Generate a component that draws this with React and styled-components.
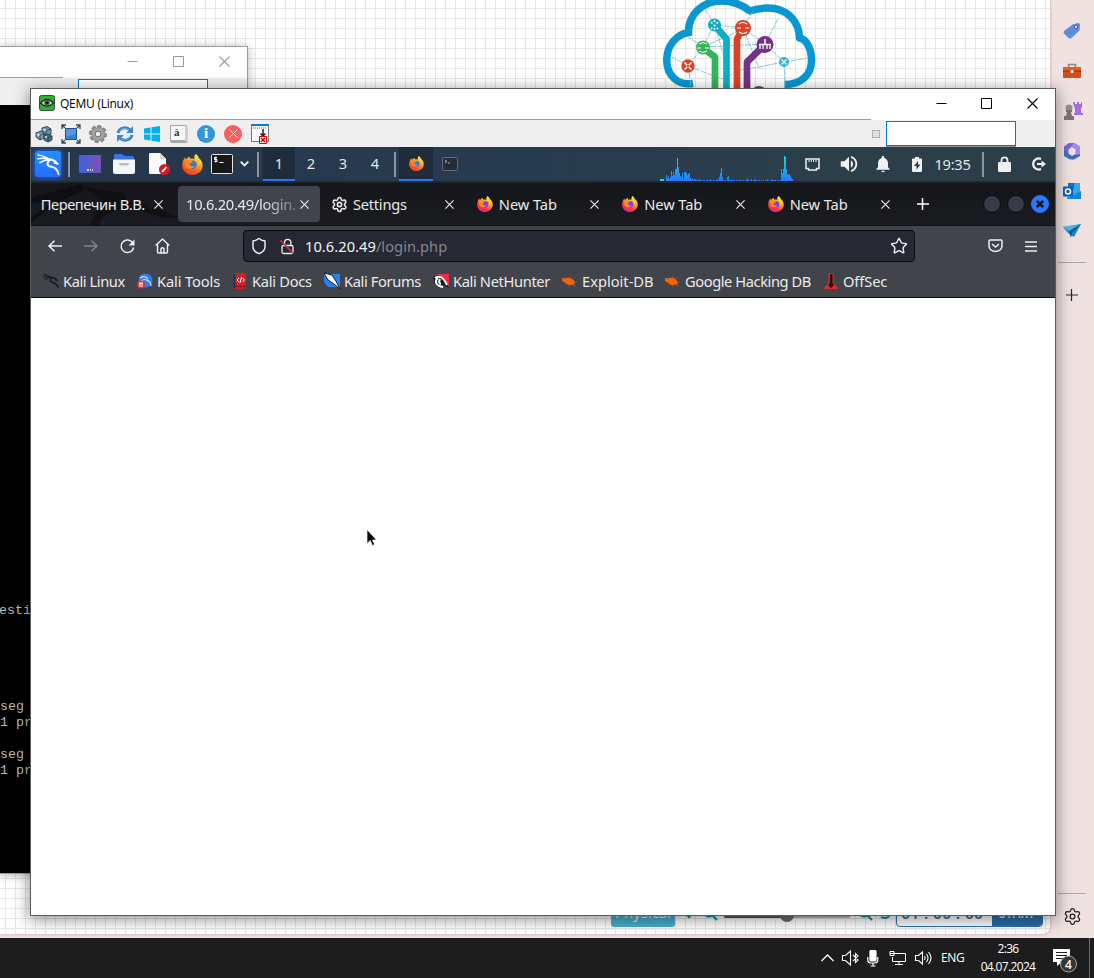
import React, { useId } from 'react';
import styled, { createGlobalStyle } from 'styled-components';
import { Settings, Star, Shield } from 'lucide-react';
import { MdVolumeUp, MdNotifications } from 'react-icons/md';

const GlobalStyle = createGlobalStyle`
  * { box-sizing: border-box; }
  body { margin: 0; overflow: hidden; }
  svg { display: block; flex: none; overflow: visible; }
`;

const ui = '"Open Sans", "Noto Sans", sans-serif';
const kali = '"Noto Sans", "Open Sans", sans-serif';

const Screen = styled.div`
  position: relative;
  width: 1094px;
  height: 978px;
  overflow: hidden;
  background: #f0e2e1;
  font-family: ${ui};
  display: flex;
  flex-direction: column;
`;
const BrowserArea = styled.div`
  display: flex;
  height: 938px;
`;
const Canvas = styled.div`
  width: 1050px;
  height: 934px;
  border-radius: 0 0 7px 0;
  box-shadow: 0 0 3px rgba(90, 50, 50, 0.35);
  background-color: #fff;
  background-image: linear-gradient(to right, #e7e7e7 1px, transparent 1px),
    linear-gradient(to bottom, #e7e7e7 1px, transparent 1px);
  background-size: 10px 10px;
  background-position: 5px 8px;
  display: flex;
  flex-direction: column;
  justify-content: space-between;
`;
const LogoRow = styled.div`
  padding-left: 660px;
  height: 100px;
`;
const LabControls = styled.div`
  display: flex;
  align-items: flex-end;
  padding: 0 5px 7px 611px;
  height: 40px;
`;
const PhysicalButton = styled.div`
  width: 64px;
  height: 29px;
  border-radius: 3px;
  background: #4aaecb;
  color: #e7f5f9;
  font-size: 15px;
  line-height: 28px;
  text-align: center;
`;
const ControlIcons = styled.div`
  width: 34px;
  height: 28px;
  flex: none;
  margin-left: ${(p) => p.$gap || 0}px;
`;
const ZoomTrack = styled.div`
  width: 126px;
  height: 3px;
  margin: 0 8px 9px 6px;
  border-radius: 2px;
  background: linear-gradient(to right, #555 64px, #b5b5b5 64px);
  display: flex;
  align-items: center;
  justify-content: center;
`;
const ZoomKnob = styled.div`
  flex: none;
  width: 14px;
  height: 14px;
  border-radius: 50%;
  background: #6b6b6b;
  margin-top: -3px;
`;
const Timer = styled.div`
  display: flex;
  margin-left: 4px;
  width: 147px;
  height: 30px;
  border: 1px solid #2f72ac;
  border-radius: 4px;
  overflow: hidden;
  background: #fff;
  color: #2d6ca5;
  font: 600 16px/30px ${ui};
`;
const TimerDigits = styled.div`
  width: 95px;
  height: 30px;
  display: flex;
  justify-content: space-between;
  padding: 0 9px 0 4px;
`;
const StartButton = styled.div`
  flex: 1;
  height: 30px;
  background: #2e6da6;
  color: #dce9f5;
  font-size: 12px;
  line-height: 32px;
  text-align: center;
`;

const EdgeRail = styled.div`
  width: 44px;
  display: flex;
  flex-direction: column;
  align-items: center;
  padding: 21px 0 12px;
`;
const RailItem = styled.div`
  width: 20px;
  height: 20px;
  margin-bottom: 20px;
  display: flex;
  align-items: center;
  justify-content: center;
`;
const RailLine = styled.div`
  width: 28px;
  height: 1px;
  background: #b4a9a9;
  margin: ${(p) => p.$m};
`;

const Window = styled.div`
  position: absolute;
  left: ${(p) => p.$x}px;
  top: ${(p) => p.$y}px;
  width: ${(p) => p.$w}px;
  height: ${(p) => p.$h}px;
  display: flex;
  flex-direction: column;
  border: 1px solid ${(p) => (p.$active ? '#5b5b5b' : '#9b9b9b')};
  background: #fff;
  box-shadow: ${(p) => (p.$active ? '0 3px 15px 1px rgba(0,0,0,.42)' : '0 1px 9px rgba(0,0,0,.3)')};
`;
const TitleBar = styled.div`
  display: flex;
  align-items: center;
  height: ${(p) => p.$h}px;
  flex: none;
  padding: 0 0 2px 8px;
  color: #000;
  font-size: 12px;
`;
const Title = styled.span`
  margin-left: 5px;
  letter-spacing: -0.25px;
  flex: 1;
`;
const CaptionButton = styled.div`
  width: ${(p) => p.$w || 45}px;
  display: flex;
  justify-content: center;
  color: ${(p) => (p.$dim ? '#9a9a9a' : '#000')};
`;
const Rule = styled.div`
  width: ${(p) => p.$w}px;
  height: 1px;
  flex: none;
  background: #a0a0a0;
`;
const ToolBar = styled.div`
  height: ${(p) => p.$h}px;
  flex: none;
  background: #efefef;
  display: flex;
  align-items: center;
  gap: 9px;
  padding: 0 39px 0 4px;
`;
const Push = styled.div`
  flex: 1;
`;
const Grip = styled.div`
  width: 8px;
  height: 8px;
  border: 1px solid #adadad;
  background: #e1e1e1;
  margin-right: -3px;
`;
const Field = styled.div`
  width: 130px;
  height: 25px;
  background: #fff;
  border: 1px solid #0078d7;
  box-shadow: 0 1px 0 #8c8c8c;
`;
const Console = styled.div`
  flex: 1;
  background: #000;
  color: #bdbdbd;
  font: 300 13.33px/16px "Liberation Mono", monospace;
  white-space: pre;
  padding-top: 498px;
  text-indent: -1px;
`;

const Panel = styled.div`
  height: 34px;
  flex: none;
  display: flex;
  align-items: center;
  background: linear-gradient(to right, #27374c, #273b50 45%, #2b3e4b 75%, #2b3e49);
  color: #e4e6e8;
  font: 14.67px ${kali};
`;
const Slot = styled.div`
  width: ${(p) => p.$w}px;
  height: 100%;
  flex: none;
  display: flex;
  align-items: center;
  justify-content: center;
  margin-left: ${(p) => p.$gap || 0}px;
  color: #f0f0f0;
`;
const KaliMenu = styled.div`
  width: 26px;
  height: 26px;
  border-radius: 3px;
  background: linear-gradient(to bottom, #2391ff, #256cff);
  box-shadow: 0 0 5px 1px #1e63d0;
  display: flex;
  align-items: center;
  justify-content: center;
`;
const Divider = styled.div`
  width: 2px;
  height: 25px;
  background: #8d959d;
`;
const Workspace = styled.div`
  width: ${(p) => p.$w || 32}px;
  height: 34px;
  flex: none;
  display: flex;
  align-items: center;
  justify-content: center;
  background: ${(p) => (p.$on ? '#1f2c3b' : 'transparent')};
  border-bottom: 2px solid ${(p) => (p.$on ? '#2777ff' : 'transparent')};
`;
const Clock = styled.div`
  width: 37px;
  margin-right: 5px;
  padding-bottom: 1px;
  white-space: nowrap;
  font-size: 14.67px;
  letter-spacing: -0.3px;
  text-align: center;
`;

const TabStrip = styled.div`
  position: relative;
  height: 45px;
  flex: none;
  display: flex;
  align-items: center;
  border-top: 2px solid #23262c;
  border-bottom: 1px solid #0e0f12;
  background: linear-gradient(to bottom, #15161a, #1b1c21);
  color: #e9e9ea;
  font: 14.67px ${kali};
`;
const DragonShade = styled.svg`
  position: absolute;
  left: 0;
  top: 0;
`;
const Tab = styled.div`
  position: relative;
  width: 145.4px;
  flex: none;
  display: flex;
  justify-content: center;
`;
const TabBody = styled.div`
  width: 142px;
  height: 36px;
  border-radius: 4px;
  display: flex;
  align-items: center;
  padding: 0 11.5px 0 8px;
  background: ${(p) => (p.$on ? '#42444b' : 'transparent')};
`;
const TabLabel = styled.span`
  flex: 1;
  min-width: 0;
  white-space: nowrap;
  margin-left: ${(p) => p.$gap || 0}px;
  letter-spacing: ${(p) => p.$ls || 0}px;
  ${(p) => p.$fade && 'mask-image: linear-gradient(to right, #000 65%, rgba(0,0,0,.2) 100%);'}
`;
const WmButton = styled.div`
  width: 18px;
  height: 18px;
  margin: 0 6px 1px 0;
  flex: none;
  border-radius: 50%;
  border: 1px solid ${(p) => (p.$close ? '#2777ff' : '#0b0c0e')};
  background: ${(p) => (p.$close ? '#2777ff' : '#373b48')};
  display: flex;
  align-items: center;
  justify-content: center;
`;

const NavBar = styled.div`
  height: 40px;
  flex: none;
  display: flex;
  align-items: center;
  padding-left: 6px;
  background: #42444b;
  color: #f2f2f3;
`;
const UrlBar = styled.div`
  width: 672px;
  height: 32px;
  margin-left: 62px;
  border: 1px solid #0b0c10;
  border-radius: 4px;
  background: #262833;
  display: flex;
  align-items: center;
  padding: 0 6px 0 6px;
  font: 14.67px ${kali};
`;
const UrlText = styled.div`
  flex: 1;
  margin-left: 3px;
  letter-spacing: 0.04px;
  color: #f3f3f4;
  span { color: #85868d; }
`;
const Bookmarks = styled.div`
  height: 32px;
  flex: none;
  display: flex;
  align-items: center;
  padding: 0 0 2px 12px;
  background: #42444b;
  border-bottom: 1px solid #0c0c0d;
  color: #ebebec;
  font: 14.67px ${kali};
`;
const Bookmark = styled.div`
  width: ${(p) => p.$w}px;
  letter-spacing: ${(p) => p.$ls}px;
  flex: none;
  display: flex;
  align-items: center;
  gap: ${(p) => p.$gap || 4}px;
  white-space: nowrap;
`;
const Page = styled.div`
  flex: 1;
  background: #fff;
`;
const Pointer = styled.svg`
  position: absolute;
  left: 366px;
  top: 529px;
`;

const TaskBar = styled.div`
  position: relative;
  height: 40px;
  background: #1d1d1e;
  display: flex;
  align-items: center;
  justify-content: flex-end;
  color: #fff;
  font-size: 12px;
`;
const Tray = styled.div`
  display: flex;
  align-items: center;
  gap: 8px;
`;
const Lang = styled.span`
  width: 25px;
  white-space: nowrap;
  letter-spacing: -0.35px;
  margin: 0 12px 1px 1px;
`;
const DateTime = styled.div`
  width: 60px;
  white-space: nowrap;
  margin-right: 15px;
  display: flex;
  flex-direction: column;
  align-items: center;
  line-height: 18px;
  letter-spacing: -0.65px;
`;
const ShowDesktop = styled.div`
  width: 5px;
  height: 40px;
  margin-left: 12px;
  border-left: 1px solid #67686b;
`;

function Minimize() {
  return <svg width="11" height="11" stroke="currentColor"><path d="M.5 5.500h10" /></svg>;
}
function Maximize() {
  return <svg width="11" height="11" stroke="currentColor" fill="none"><path d="M.5.5h10v10H.5z" /></svg>;
}
function Close({ size = 11, width = 1.1 }) {
  return (
    <svg width={size} height={size} viewBox="0 0 11 11" stroke="currentColor" strokeWidth={width} fill="none">
      <path d="M.5.5l10 10M10.5.5l-10 10" />
    </svg>
  );
}

function CloudLogo() {
  const nodes = [
    [28, 66, 6.7, '#d74528'], [43, 47.5, 7, '#35b558'], [54.5, 25, 6.5, '#08afc7'],
    [83, 28, 8, '#d74528'], [105, 44.5, 8.5, '#753286'], [124, 62, 5, '#35aee0'],
  ];
  return (
    <svg width="160" height="95" fill="none">
      <path d="M33 84.500C17 87 6.700 75.500 6.700 61c0-14 9.300-25.500 21.800-27.500C28 15.500 43 2 61 2c13 0 22.500 4.500 29.500 10.500"
        stroke="#0797d3" strokeWidth="7.500" transform="translate(0 -1)" />
      <path d="M88 11.500c8-2.500 12-3.500 20-3.500 18 0 29.500 10 32 30 8 .5 11.500 10 11.500 22.500C151.500 75 142 84.500 124 84.500"
        stroke="none" />
      <path d="M88 11.500c7-2.500 12-3.500 20-3.500 19 0 31 13 31.500 30 6.500 1 12 10 12 22.500 0 14-10 24-27 24"
        stroke="#0797d3" strokeWidth="7.500" strokeLinejoin="round" />
      <g stroke="#6cbadb" strokeWidth=".8">
        <path d="M45 9l10 16 28 3 23 17 18 17M54 25L43 47 28 66l3 20M55 25l14 50M43 47l62-3 13-25M43 47L28 37M83 28l10-17M28 66l-16-9M124 62l24-4M124 62l-36 7M124 62l1 24M43 47l40-18M28 66l34 13 26-12M83 28l16 40" strokeDasharray="6 1" />
      </g>
      <g strokeWidth="6.700" strokeLinejoin="round">
        <path d="M43 48l12 9v35" stroke="#35b558" />
        <path d="M54.500 25l12 14v53" stroke="#08afc7" />
        <path d="M83 28l-6 11v53" stroke="#d74528" />
        <path d="M105 44.500L87 62v30" stroke="#753286" />
      </g>
      <circle cx="99" cy="94" r="8" fill="#753286" />
      {nodes.map(([x, y, r, c]) => <circle key={x} cx={x} cy={y} r={r} fill={c} />)}
      <g stroke="#fff" strokeWidth="1.500">
        <path d="M24.500 62.500l7 7M31.500 62.500l-7 7" strokeDasharray="4 2" />
        <path d="M51 22l7 7M58 22l-7 7M54.500 20v2M54.500 28v2" strokeDasharray="2 2" />
        <path d="M37 48h4M45 48h4M39 44q4-3 8 0M39 51q4 3 8 0" strokeWidth="1" />
        <path d="M77 28h4M85 28h4M79 24q4-3 8 0M79 32q4 3 8 0" strokeWidth="1.200" />
        <path d="M99 44.500h12M105 39v5" /><path d="M100 45v4M103 45v4M107 45v4M110 45v4" strokeWidth="1.300" />
        <path d="M121.500 59.500l5 5M126.500 59.500l-5 5" strokeWidth="1.200" />
      </g>
    </svg>
  );
}

function Firefox({ size = 16, panel }) {
  const id = useId();
  return (
    <svg width={size} height={size} viewBox="0 0 20 20">
      <defs>
        <linearGradient id={`${id}a`} x1=".8" y1="0" x2=".25" y2="1">
          <stop offset=".1" stopColor="#fff04a" />
          <stop offset=".42" stopColor="#ff9a23" />
          <stop offset=".72" stopColor={panel ? '#ff5a1e' : '#ff3550'} />
          <stop offset="1" stopColor={panel ? '#e83a2a' : '#e01b8b'} />
        </linearGradient>
      </defs>
      <path d="M13 0c2 1.300 2.700 2.800 3.300 4 2.500 1.800 3.700 5 3.300 8-.6 4.700-4.700 8-9.600 8C4.400 20 0 15.800.2 10.500.3 7.500 1.500 4.500 3 3c.1 1 .3 1.500.7 2C5 3.700 6 2.700 7.500 2.500 7.200 3.300 7.500 4 8 4.600c1.300-.5 3-.3 4 .3C11.300 3.200 11.800 1.500 13 0z" fill={`url(#${id}a)`} />
      <circle cx="10" cy="10.300" r="4" fill={panel ? '#3577dd' : '#7a3fe0'} />
      <path d="M2.500 6.500c3-1.500 6-1 7.900 1.300-1.600.1-2.500 1-3.500 1.500.6 2.500 3.200 3.300 5.500 2.100-1.500 3-7.200 3.600-9.200.4z" fill="#ff8b1f" />
      <path d="M12 2.500c3.800 2.500 4.800 5.500 3 9.500 2-1.500 2.800-3.500 2.500-5.500C16.500 4.500 14 3 12 2.500z" fill="#ffc62d" />
    </svg>
  );
}

function Dragon({ color = '#fff', size = 22 }) {
  return (
    <svg width={size} height={size} viewBox="0 0 24 24" fill="none" stroke={color} strokeLinecap="round" strokeLinejoin="round">
      <path d="M1 2c5 1 9 2.500 12 5M1 6c4-1 8-.7 12 1M3 10c3-2 6-3 10-3" strokeWidth="1.500" />
      <path d="M12 6.500c3-.3 5.500.7 7.500 3.300" strokeWidth="2.200" />
      <path d="M13.500 7.500c-3 1.500-3.500 5-.5 6.300 4 1.200 8 1.200 9.500 8.200" strokeWidth="2" />
      <path d="M18 7.500l4 4-4-1" strokeWidth="1.300" />
    </svg>
  );
}

function Cubes() {
  return (
    <svg width="18" height="18" strokeLinejoin="round" stroke="#25404e" strokeWidth=".9">
      <g>
        <path d="M7 3l5-1.500L16 4v5l-5 2-4-3z" fill="#6d93a5" /><path d="M7 3l4 2.500L16 4M11 5.500V11" fill="none" />
        <path d="M1 8l5-2 3 2v5l-4 2-4-3z" fill="#7d9daa" /><path d="M1 8l4 2.500L9 8M5 10.500V15" fill="none" />
        <path d="M9 10l4-1 4 2v4l-4 2-4-2z" fill="#456f84" /><path d="M9 10l4 2.500 4-1.500M13 12.500V17" fill="none" />
      </g>
      <path d="M8 4l3 1.500M2 9l2.500 1.500M10 11.500l2 1" stroke="#d7e5eb" strokeWidth="1.500" />
    </svg>
  );
}
function FullScreen() {
  return (
    <svg width="18" height="18" fill="none">
      <path d="M3.500 3.500h11v11h-11z" fill="#3781ca" stroke="#1c4f91" />
      <path d="M4 4h10v5L4 12z" fill="#5797d6" />
      <path d="M0 4V0h4M14 0h4v4M18 14v4h-4M4 18H0v-4M0 0l3 3M18 0l-3 3M18 18l-3-3M0 18l3-3" stroke="#37495a" strokeWidth="1.300" />
    </svg>
  );
}
function Cog() {
  return (
    <svg width="18" height="18" viewBox="-9.500 -9.500 19 19">
      <g fill="#929292" stroke="#707070" strokeWidth=".8">
        {[0, 45, 90, 135].map((a) => <rect key={a} x="-2" y="-9" width="4" height="18" rx="1" transform={`rotate(${a + 10})`} />)}
      </g>
      <circle r="6.300" fill="#a3a3a3" />
      <circle r="3" fill="#efefef" stroke="#686868" />
    </svg>
  );
}
function Refresh() {
  return (
    <svg width="18" height="18" fill="none" stroke="#3481c9" strokeWidth="3">
      <path d="M2 8c1-5 8-7 12-3M16 10c-1 5-8 7-12 3" />
      <path d="M17 1v7h-7zM1 17v-7h7z" fill="#3a8ad1" stroke="none" />
      <path d="M3 7c2-4 7-5 10-2M15 11c-2 4-7 5-10 2" stroke="#7db7e8" strokeWidth=".8" />
    </svg>
  );
}
function WindowsFlag() {
  return (
    <svg width="18" height="18" fill="#00b3f0">
      <path d="M1 3.500l6.500-1v6H1zM8.500 2.300L17 1v7.500H8.500zM1 9.500h6.500v6L1 14.600zM8.500 9.500H17V17l-8.500-1.200z" />
    </svg>
  );
}
const KeyCap = styled.div`
  width: 18px;
  height: 18px;
  flex: none;
  border: 1px solid #a3a3a3;
  border-bottom: 3px solid #a9a9a9;
  border-right: 3px solid #cfcfcf;
  border-radius: 2px;
  background: #f7f7f7;
  color: #333;
  font: bold 11px/13px "Liberation Serif", serif;
  padding-left: 3px;
`;
const InfoDot = styled.div`
  width: 18px;
  height: 18px;
  flex: none;
  border-radius: 50%;
  background: #3496da;
  color: #fff;
  font: bold 15px/17px "Liberation Serif", serif;
  text-align: center;
`;
const StopDot = styled.div`
  width: 18px;
  height: 18px;
  flex: none;
  border-radius: 50%;
  background: #fd5c5c;
  color: #ffe0e0;
  display: flex;
  align-items: center;
  justify-content: center;
`;
function CloseWindowIcon() {
  return (
    <svg width="18" height="20" fill="none">
      <path d="M.5.500h17v17H.5z" fill="#f8f8f8" stroke="#777" />
      <path d="M0 0h18v2H0z" fill="#0078d7" /><path d="M2 4h14" stroke="#666" strokeDasharray="1 1" />
      <path d="M12 5v7M9.500 9.500L12 12l2.500-2.500" stroke="#222" strokeWidth="1.500" />
      <path d="M8.500 12.500h7v7h-7z" fill="#fff" stroke="#d80000" />
      <path d="M10 14l4 4M14 14l-4 4" stroke="#d80000" strokeWidth="1.700" />
    </svg>
  );
}
function QemuIcon() {
  return (
    <svg width="16" height="16">
      <rect x=".5" y=".5" width="15" height="15" rx="2" fill="#2fae2f" stroke="#36513a" />
      <path d="M1.500 8q6.500-7 13 0-6.500 6.500-13 0z" fill="#d7dbd4" stroke="#1c3520" strokeWidth="1.300" />
      <circle cx="8" cy="7.800" r="2.800" fill="#555" /><circle cx="8" cy="7.800" r="1.300" fill="#111" />
    </svg>
  );
}

const LOAD = [6, 3, 5, 2, 4, 10, 5, 9, 6, 12, 12, 23, 14, 8, 5, 4, 8, 2, 9, 9, 8, 6, 7, 8, 3, 2, 3, 1, 2, 2, 1, 1, 1, 2, 1, 1, 0, 1, 1, 0, 1, 1, 1, 0, 2, 1, 0, 1, 1, 0, 1, 2, 1, 4, 8, 13, 4, 1, 1, 1, 0, 4, 5, 1, 1, 1, 1, 1, 1, 0, 1, 1, 0, 1, 1, 1, 0, 1, 0, 1, 1, 3, 1, 0, 1, 2, 0, 1, 1, 2, 1, 0, 1, 1, 0, 1, 0, 1, 0, 1, 0, 2, 1, 0, 0, 2, 1, 1, 1, 1, 0, 1, 1, 0, 1, 12, 8, 12, 25, 24, 12, 7, 6, 7, 5, 3, 2];
function LoadGraph() {
  return (
    <svg width="133" height="34" shapeRendering="crispEdges">
      <defs>
        <linearGradient id="load" x1="0" x2="0" y1="8" y2="34" gradientUnits="userSpaceOnUse">
          <stop offset="0" stopColor="#0fe0e5" /><stop offset="1" stopColor="#2777ff" />
        </linearGradient>
      </defs>
      <path d="M0 33h4" stroke="#17e0cf" strokeWidth="2" />
      <g fill="url(#load)">{LOAD.map((v, i) => <rect key={i} x={6 + i} y={34 - v} width="1" height={v} />)}</g>
    </svg>
  );
}

function PanelApps() {
  return (
    <>
      <Slot $w={34}><KaliMenu><Dragon size={23} /></KaliMenu></Slot>
      <Slot $w={8}><Divider /></Slot>
      <Slot $w={34}>
        <svg width="22" height="18">
          <defs><linearGradient id="desk"><stop stopColor="#3c64dc" /><stop offset="1" stopColor="#7950b8" /></linearGradient></defs>
          <rect width="22" height="18" rx="1" fill="url(#desk)" /><path d="M8 15h2M11 15h1M13 15h1" stroke="#fff" strokeWidth="1.500" />
        </svg>
      </Slot>
      <Slot $w={34}>
        <svg width="22" height="20">
          <path d="M1 1q0-1 1-1h7l3 2h7q2 0 2 2v4H1z" fill="#3474e8" /><path d="M0 5.500h22V18q0 2-2 2H2q-2 0-2-2z" fill="#f4f5f7" />
          <rect x="6" y="9" width="10" height="2.500" rx="1.200" fill="#bdbdc3" />
        </svg>
      </Slot>
      <Slot $w={36}>
        <svg width="21" height="22">
          <path d="M0 1q0-1 1-1h10l6 6v15H1q-1 0-1-1z" fill="#fafafa" /><path d="M11 0v6h6z" fill="#d9d9dc" />
          <circle cx="15.500" cy="16.500" r="5.500" fill="#d01c22" /><path d="M13 19l4.500-5" stroke="#fff" strokeWidth="1.800" />
        </svg>
      </Slot>
      <Slot $w={30}><Firefox size={21} panel /></Slot>
      <Slot $w={30}>
        <svg width="22" height="20" fill="none">
          <rect x=".5" y=".5" width="21" height="19" rx="1" fill="#181818" stroke="#e5e5e5" />
          <path d="M6 3.500H3.500v2H6v2H3.500M4.800 2.500v6M8.500 8.500h4" stroke="#fff" />
        </svg>
      </Slot>
      <Slot $w={15}><svg width="9" height="6" fill="none" stroke="#eee" strokeWidth="1.900"><path d="M.7.700l3.800 3.800L8.300.700" /></svg></Slot>
      <Slot $w={11}><Divider /></Slot>
    </>
  );
}

function CrossedLock() {
  return (
    <svg width="15" height="17" fill="none" stroke="#f0f0f0" strokeWidth="1.300">
      <path d="M4.500 7V4.500a3.200 3.200 0 016.400 0V7" /><rect x="2" y="7.500" width="11" height="8" rx="1.500" />
      <path d="M.5 2.500l13 13" stroke="#e22850" strokeWidth="1.600" />
    </svg>
  );
}

const MARKS = [
  ['Kali Linux', 94, -0.42, <Dragon key="i" size={16} color="#15171a" />],
  ['Kali Tools', 95, -0.12, (
    <svg key="i" width="16" height="16"><circle cx="8.500" cy="7.500" r="7" fill="#2e7df0" /><path d="M3 5q5-3 8 1M4 8q4-3 7 0M10 7q4 2 4 6" stroke="#dce9ff" fill="none" strokeWidth="1.200" /><circle cx="4" cy="11.500" r="4" fill="#e6322c" /><path d="M2 10h4M3 10v4M5 10v4" stroke="#fff" /></svg>
  )],
  ['Kali Docs', 92, -0.28, (
    <svg key="i" width="16" height="16" fill="none"><rect x="2" width="12" height="16" rx="1.500" fill="#d61b22" /><path d="M2.500 1v14" stroke="#16305a" strokeWidth="1.500" /><path d="M3 13.500h11" stroke="#8e1016" /><path d="M7 5L5 7l2 2M10.500 5l2 2-2 2M9.500 4L8 10" stroke="#fff" /></svg>
  )],
  ['Kali Forums', 109, -0.36, (
    <svg key="i" width="16" height="16"><path d="M0 1h16v13H4L0 9z" fill="#2880f2" /><path d="M0 0l8 2 4 6 4 8-6-5-6-4z" fill="#f4f7fb" stroke="#16191d" strokeWidth="1" /></svg>
  )],
  ['Kali NetHunter', 128, -0.36, (
    <svg key="i" width="16" height="16" fill="none"><path d="M4 1h12v12H8z" fill="#ed2e3c" /><path d="M0 4l6-2 7 6 3 7-6-3-3 3-5-4z" fill="#16181b" /><path d="M2 5c5-3 9 0 12 7M5 5c-4 3-2 8 5 9M7 6q-2 4 1 5" stroke="#fff" strokeWidth="2" /></svg>
  )],
  ['Exploit-DB', 103, 0, 'bug'],
  ['Google Hacking DB', 160, -0.42, 'bug'],
  ['OffSec', 80, -0.1, (
    <svg key="i" width="15" height="16"><path d="M4.500 0h5v10l4 4v2h-13v-2l4-4z" fill="#e22624" /><path d="M6 1h2.500v9l1.500 2-3 3-3-3 2-2z" fill="#2a0e10" /></svg>
  )],
];
function Bug() {
  return (
    <svg width="16" height="16" fill="none">
      <path d="M4 4l2 2M9 3v3M1 7l4 1M12 6l2-2M4 12l2-2M8 14l1-3M12 12l3 1M13 9h3" stroke="#a24b1e" />
      <path d="M1 5l3 .5c4-2 9 0 10 5-3 2.500-8 2-10-1L1 8z" fill="#f06410" />
    </svg>
  );
}

function EdgeSidebar() {
  return (
    <EdgeRail>
      <RailItem>
        <svg width="18" height="18"><path d="M9.500 2.500L15 1q2 0 2 2l-.5 5.500-8 7.500q-1.500 1-3 0L1 11.500q-1-1.500 0-2.500z" fill="#608bdd" /><circle cx="13" cy="5" r="1.700" fill="#dbe6fc" stroke="#3b5fa9" /></svg>
      </RailItem>
      <RailItem>
        <svg width="18" height="16"><path d="M5.500 4V1.500h7V4" fill="none" stroke="#8b8887" strokeWidth="1.600" /><rect y="4" width="18" height="11" rx="1" fill="#d84c18" /><path d="M0 4h18v4H0z" fill="#e95b22" /><path d="M0 8h18" stroke="#8b2a0b" /><circle cx="9" cy="8.500" r="1.700" fill="#f5e8df" /></svg>
      </RailItem>
      <RailItem>
        <svg width="19" height="20"><path d="M10 1h2v2h2V1h2v2h2V1h1v5l-1 1v5h2v2h-9v-2h1V7l-1-1z" fill="#a06fdc" /><circle cx="6" cy="7" r="3.500" fill="#92918f" /><path d="M3 9h6v2H8l1 4h2v4H1v-4h2l1-4H3z" fill="#777674" /></svg>
      </RailItem>
      <RailItem>
        <svg width="18" height="18"><path d="M6 1h5.500L17 4.500v5L12 7 9 5 6 7v6l-5-3V4.500z" fill="#7865d9" /><path d="M1 8v6l6 3.500h4L17 14V8l-5 .5V12l-3 2-4-3z" fill="#3b6fc5" /><path d="M11 1l6 3.500V12l-5 1V7L8 4.500z" fill="#a58be9" /><path d="M9 5.500l3.500 2v4L9 13.500l-3.500-2v-4z" fill="#f0e2e1" /></svg>
      </RailItem>
      <RailItem>
        <svg width="18" height="18"><rect x="5" y="1" width="12" height="13" fill="#2fa9ec" /><path d="M5 1h6v6H5z" fill="#1271be" /><path d="M4 9l7 4 7-4v8H4z" fill="#2bbdf3" /><path d="M4 17l14-8v8z" fill="#1688d2" /><rect y="4.500" width="10" height="10" rx="1" fill="#0b65b7" /><circle cx="5" cy="9.500" r="2.500" fill="none" stroke="#fff" strokeWidth="1.500" /></svg>
      </RailItem>
      <RailItem>
        <svg width="18" height="16"><path d="M0 4l18-3-7 13-5-3z" fill="#1c86cc" /><path d="M0 4l18-3L6 8z" fill="#45b9ed" /><path d="M6 8l12-7-9 9-1 5z" fill="#0c5894" /></svg>
      </RailItem>
      <RailLine $m="1px 0 25.5px" />
      <svg width="12" height="12" stroke="#262626" strokeWidth="1.200"><path d="M5.500 0v12M0 6h12" /></svg>
      <Push />
      <RailLine $m="0 0 13px" />
      <Settings size={19} strokeWidth={1.600} color="#1d1d1d" />
    </EdgeRail>
  );
}

function SystemTray() {
  return (
    <TaskBar>
      <Tray>
        <svg width="13" height="8" fill="none" stroke="#fff" strokeWidth="1.300"><path d="M.5 7L6.500 1l6 6" /></svg>
        <svg width="17" height="16" fill="none" stroke="#fff" strokeWidth="1.100"><path d="M.5 5.500h3l5-4.500v14l-5-4.500h-3zM11 5l5 5-2.500 2.500v-9L16 6l-5 5" /></svg>
        <svg width="12" height="17" fill="none" stroke="#fff" strokeWidth="1.200"><rect x="3" y=".5" width="6" height="10.500" rx="1" fill="#fff" /><path d="M.8 7v3q0 3 3 3h4q3 0 3-3V7M6 13v3M3.500 16h5" /></svg>
        <Slot $w={18} $gap={2}><svg width="18" height="16" fill="none" stroke="#fff"><path d="M6 3.500h10.500v8H3.500V7M1 1.500h4v4H1zM1 3.500h5M10 11.500v3M6 14.500h8" /></svg></Slot>
        <svg width="17" height="14" fill="none" stroke="#fff" strokeWidth="1.100"><path d="M.5 4.500h3L7.500 1v12l-4-3.500h-3zM9.500 5q1.500 2 0 4M11.500 3q3 4 0 8M13.500 1q5 6 0 12" /></svg>
        <Lang>ENG</Lang>
      </Tray>
      <DateTime><span>2:36</span><span>04.07.2024</span></DateTime>
      <svg width="24" height="28" fill="none">
        <path d="M0 5h17v13H9l-5 4v-4H0z" fill="#fff" /><path d="M3 8.500h11M3 11.500h11M3 14.500h7" stroke="#222" strokeWidth="1.200" />
        <circle cx="15.500" cy="20" r="8" fill="#343434" stroke="#aaa" />
        <text x="15.500" y="24.500" fill="#fff" fontFamily="Open Sans" fontSize="12" fontWeight="600" textAnchor="middle">4</text>
      </svg>
      <ShowDesktop />
    </TaskBar>
  );
}

function BrowserTab({ label, icon, gap, active, spacing }) {
  return (
    <Tab>
      <TabBody $on={active}>
        {icon}
        <TabLabel $gap={gap} $fade={active} $ls={spacing}>{label}</TabLabel>
        <Close size={9} width={1.400} />
      </TabBody>
    </Tab>
  );
}

export default function App() {
  return (
    <>
      <GlobalStyle />
      <Screen>
        <BrowserArea>
          <Canvas>
            <LogoRow><CloudLogo /></LogoRow>
            <LabControls>
              <PhysicalButton>Physical</PhysicalButton>
              <ControlIcons $gap={9}>
                <svg width="34" height="28" fill="none" stroke="#0c93a4" strokeWidth="2.200">
                  <path d="M5 2v17M1 14l4 4 4-4" /><circle cx="25" cy="13" r="4.500" /><path d="M28 16l5 5" />
                </svg>
              </ControlIcons>
              <ZoomTrack><ZoomKnob /></ZoomTrack>
              <ControlIcons>
                <svg width="34" height="28" fill="none" stroke="#0c93a4" strokeWidth="2.200">
                  <circle cx="6" cy="13" r="4.500" /><path d="M9 16l5 5M23 18q7 3 9-3t-4-8" />
                </svg>
              </ControlIcons>
              <Timer>
                <TimerDigits><span>01</span><span>:</span><span>00</span><span>:</span><span>00</span></TimerDigits>
                <StartButton>START</StartButton>
              </Timer>
            </LabControls>
          </Canvas>
          <EdgeSidebar />
        </BrowserArea>
        <SystemTray />

        <Window $x={-1} $y={46} $w={249} $h={828}>
          <TitleBar $h={30}>
            <Push />
            <CaptionButton $dim><Minimize /></CaptionButton>
            <CaptionButton $dim $w={46}><Maximize /></CaptionButton>
            <CaptionButton $dim $w={46}><Close /></CaptionButton>
          </TitleBar>
          <Rule $w={63} />
          <ToolBar $h={27}><Push /><Field /></ToolBar>
          <Console>{'esti\n\n\n\n\n\nseg\n1 pr\n\nseg\n1 pr'}</Console>
        </Window>

        <Window $active $x={30} $y={88} $w={1026} $h={828}>
          <TitleBar $h={30}>
            <QemuIcon />
            <Title>QEMU (Linux)</Title>
            <CaptionButton $w={44}><Minimize /></CaptionButton>
            <CaptionButton $w={46}><Maximize /></CaptionButton>
            <CaptionButton $w={46}><Close /></CaptionButton>
          </TitleBar>
          <Rule $w={840} />
          <ToolBar $h={27}>
            <Cubes /><FullScreen /><Cog /><Refresh /><WindowsFlag />
            <KeyCap>à</KeyCap><InfoDot>i</InfoDot><StopDot><Close size={9} /></StopDot><CloseWindowIcon />
            <Push /><Grip /><Field />
          </ToolBar>
          <Panel>
            <PanelApps />
            <Workspace $on>1</Workspace>
            <Workspace>2</Workspace>
            <Workspace>3</Workspace>
            <Workspace>4</Workspace>
            <Slot $w={8}><Divider /></Slot>
            <Workspace $on $w={34}><Firefox size={15} panel /></Workspace>
            <Slot $w={34}>
              <svg width="16" height="14" fill="none"><rect x=".5" y=".5" width="15" height="13" rx="1" fill="#252d38" stroke="#616a74" /><path d="M3 3l2 1.500L3 6M6 6h2" stroke="#b0b4b8" /></svg>
            </Slot>
            <Push />
            <LoadGraph />
            <Slot $w={38}>
              <svg width="15" height="13" fill="none" stroke="#f0f0f0" strokeWidth="1.500"><path d="M1 1h13v9.500h-2.500v1.500h-8v-1.500H1z" /><path d="M4 2v2M6.300 2v2M8.600 2v2M11 2v2" strokeWidth="1" /></svg>
            </Slot>
            <Slot $w={35}><MdVolumeUp size={22} /></Slot>
            <Slot $w={34}><MdNotifications size={20} /></Slot>
            <Slot $w={34}>
              <svg width="10" height="15"><path d="M3 0h4v1.500h2.200q.8 0 .8.800V14q0 1-1 1H1q-1 0-1-1V2.300q0-.8.8-.8H3z" fill="#f0f0f0" /><path d="M6 4L2 9h2.500v3.500l4-5H6z" fill="#2b3e4b" /></svg>
            </Slot>
            <Clock>19:35</Clock>
            <Slot $w={14}><Divider /></Slot>
            <Slot $w={28}>
              <svg width="13" height="16"><path d="M3.500 7V4.500a3 3.200 0 016 0V7" fill="none" stroke="#f0f0f0" strokeWidth="1.800" /><rect y="6" width="13" height="10" rx="1.300" fill="#f0f0f0" /></svg>
            </Slot>
            <Slot $w={33} $gap={4}>
              <svg width="15" height="14" fill="none" stroke="#f0f0f0" strokeWidth="2.200"><path d="M10 2a5.500 5.500 0 100 10M6 7h6" /><path d="M10.500 3.500L15 7l-4.500 3.500z" fill="#f0f0f0" stroke="none" /></svg>
            </Slot>
          </Panel>
          <TabStrip>
            <DragonShade width="150" height="42">
              <path d="M0 15L49 1l4 6-28 13L0 40v-5l24-18L0 20z" fill="#0b0c0e" opacity=".7" />
              <path d="M92 10l5 9 4-3 5 6 5-2 7 5 9 1 20 8-15 1-12-4q-23-10-40-2-14 8-11 14H59q4-15 14-22L54 4" fill="#0b0c0e" opacity=".6" />
            </DragonShade>
            <BrowserTab label="Перепечин В.В." spacing={-0.42} />
            <BrowserTab label="10.6.20.49/login." spacing={-0.28} active />
            <BrowserTab label="Settings" icon={<Settings size={17} strokeWidth={2.200} />} gap={4.500} spacing={-0.25} />
            <BrowserTab label="New Tab" icon={<Firefox />} gap={6} spacing={-0.1} />
            <BrowserTab label="New Tab" icon={<Firefox />} gap={6} spacing={-0.1} />
            <BrowserTab label="New Tab" icon={<Firefox />} gap={6} spacing={-0.1} />
            <Slot $w={40}><svg width="12" height="12" stroke="#fff" strokeWidth="1.500"><path d="M5.500 0v12M0 6h12" /></svg></Slot>
            <Push />
            <WmButton /><WmButton />
            <WmButton $close><svg width="8" height="8" stroke="#101216" strokeWidth="2.400"><path d="M.8.800l6.400 6.400M7.200.800L.8 7.200" /></svg></WmButton>
          </TabStrip>
          <NavBar>
            <Slot $w={36}><svg width="14" height="12" fill="none" stroke="#f0f0f0" strokeWidth="1.500"><path d="M14 6H1M6.500.700L1 6l5.500 5.300" /></svg></Slot>
            <Slot $w={36}><svg width="14" height="12" fill="none" stroke="#828389" strokeWidth="1.500"><path d="M0 6h13M7.500.700L13 6l-5.500 5.300" /></svg></Slot>
            <Slot $w={36}><svg width="15" height="15" fill="none" stroke="#f0f0f0" strokeWidth="1.500"><path d="M12.800 4A6.300 6.300 0 1013.600 8.500" /><path d="M14.500.500v6h-6z" fill="#f0f0f0" stroke="none" /></svg></Slot>
            <Slot $w={36}><svg width="16" height="16" fill="none" stroke="#f0f0f0" strokeWidth="1.400" strokeLinejoin="round"><path d="M.7 7.500L7.500 1l6.800 6.500M2.500 6.500V14q0 1 1 1h8q1 0 1-1V6.500M6 15v-4.500q1.500-1.500 3 0V15" /></svg></Slot>
            <UrlBar>
              <Shield size={18} strokeWidth={1.900} />
              <Slot $w={29} $gap={5}><CrossedLock /></Slot>
              <UrlText>10.6.20.49<span>/login.php</span></UrlText>
              <Star size={18} strokeWidth={1.900} />
            </UrlBar>
            <Push />
            <Slot $w={36}><svg width="15" height="14" fill="none" stroke="#f0f0f0" strokeWidth="1.500"><path d="M2 1h11q1 0 1 1v4.500q0 5.500-6.500 6-6.500-.5-6.500-6V2q0-1 1-1zM4 5l3.500 3L11 5" /></svg></Slot>
            <Slot $w={36}><svg width="12" height="11" stroke="#f0f0f0" strokeWidth="1.300"><path d="M0 1h12M0 5.500h12M0 10h12" /></svg></Slot>
            <Slot $w={6} />
          </NavBar>
          <Bookmarks>
            {MARKS.map(([label, w, spacing, icon]) => (
              <Bookmark key={label} $w={w} $ls={spacing} $gap={icon === 'bug' ? 5 : 4}>
                {icon === 'bug' ? <Bug /> : icon}{label}
              </Bookmark>
            ))}
          </Bookmarks>
          <Page />
        </Window>
        <Pointer width="11" height="18"><path d="M1 .5v14l3.300-3 2 5 2.200-1-2-4.500H10.500z" fill="#000" stroke="#fff" strokeWidth=".7" /></Pointer>
      </Screen>
    </>
  );
}
